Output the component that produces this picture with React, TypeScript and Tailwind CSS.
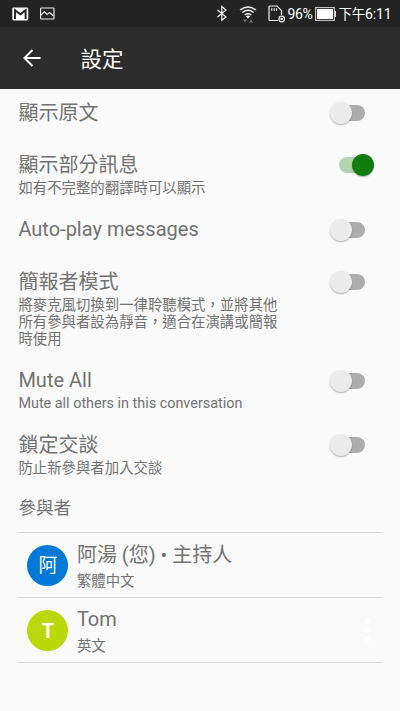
import React from 'react';

function Toggle({ on = false }: { on?: boolean }) {
  return (
    <span className={`relative block h-4 w-[30px] shrink-0 rounded-full ${on ? 'mr-[31px] bg-[#b2d4b3]' : 'mr-[35px] bg-[#adadad]'}`}>
      <span
        className={`absolute -top-[3px] size-[22px] rounded-full shadow-[0_1px_1.5px_rgba(0,0,0,0.3)] ${on ? 'left-[13px] bg-[#117c10]' : '-left-[5px] bg-[#ececec]'}`}
      />
    </span>
  );
}

type RowProps = { title: string; lines?: string[]; on?: boolean; height: string; latin?: boolean };

function SettingRow({ title, lines = [], on, height, latin }: RowProps) {
  return (
    <div className={`flex items-start justify-between ${height}`}>
      <div>
        <div className={`whitespace-nowrap text-[20px] leading-6 ${latin ? '' : 'pt-px'}`}>{title}</div>
        <div className="pt-[3px]">
          {lines.map((line) => (
            <div key={line} className="whitespace-nowrap text-[14.4px] leading-[17px]">{line}</div>
          ))}
        </div>
      </div>
      <div className="pt-[5px]">
        <Toggle on={on} />
      </div>
    </div>
  );
}

type PersonProps = { initial: string; name: string; language: string; color: string; latin?: boolean; menu?: boolean };

function Person({ initial, name, language, color, latin, menu }: PersonProps) {
  return (
    <div className="mr-[18px] flex h-[65px] items-center border-b border-[#d9d9d9] pl-[9px]">
      <div className={`flex size-[41px] items-center justify-center rounded-full pt-[2px] text-white ${color} ${latin ? 'text-[20px] font-bold' : 'text-[19px]'}`}>
        {initial}
      </div>
      <div className="ml-[8.5px] flex-1">
        <div className={`whitespace-nowrap text-[20px] leading-6 ${latin ? 'pt-[2px]' : 'pt-[3px]'}`}>{name}</div>
        <div className={`text-[14.4px] leading-[17px] ${latin ? 'mt-[7px]' : 'mt-[6px]'}`}>{language}</div>
      </div>
      {menu && (
        <div className="mr-3 flex flex-col gap-[3px]">
          <span className="size-[6px] rounded-full bg-white" />
          <span className="size-[6px] rounded-full bg-white" />
          <span className="size-[6px] rounded-full bg-white" />
        </div>
      )}
    </div>
  );
}

function StatusBar() {
  return (
    <div className="flex h-[27px] items-center bg-[#232323] pl-3 text-white">
      <svg width="17" height="14" viewBox="0 0 17 14">
        <rect x="0.3" y="0.5" width="16" height="13" rx="1.4" fill="#fff" />
        <path d="M3 12V3.2L8.3 7.2L13.6 3.2V12" fill="none" stroke="#232323" strokeWidth="1.9" />
      </svg>
      <svg className="ml-[11px]" width="15" height="13" viewBox="0 0 15 13" fill="none" stroke="#f0f0f0" strokeWidth="1.15">
        <rect x="0.6" y="1" width="13.4" height="11" rx="0.8" />
        <path d="M1 8L4.5 4.5L7 7.5L9.5 5.5L13.5 9" />
      </svg>
      <svg className="ml-auto" width="12" height="17" viewBox="0 0 12 17" fill="none" stroke="#f4f4f4" strokeWidth="1.2">
        <path d="M1.5 5L10 12L5.8 15.3V1.5L10 5L1.5 12" />
      </svg>
      <svg className="ml-[11.5px]" width="18" height="18" viewBox="0 0 18 18" fill="none" stroke="#f2f2f2" strokeWidth="1.4">
        <path d="M1 5Q9 -1 17 5M3.3 7.5Q9 3 14.7 7.5M5.6 10Q9 7.4 12.4 10" />
        <path d="M6.8 11.2Q9 9.7 11.2 11.2L9 13.4Z" fill="#fff" stroke="none" />
        <path d="M4 14.5H8L6 17.5ZM10 17.5H14L12 14.5Z" fill="#777" stroke="none" />
      </svg>
      <svg className="ml-[10.5px]" width="18" height="18" viewBox="0 0 18 18" fill="none" stroke="#eee" strokeWidth="1.2">
        <path d="M10 15.5H2Q1 15.5 1 14.5V2Q1 1 2 1H9L13.5 5.5V10" />
        <path d="M3.8 3V6M6.2 3V6M8.6 3V6" strokeWidth="1" />
        <circle cx="13.7" cy="14" r="2.8" />
        <circle cx="13.7" cy="14" r="0.7" fill="#eee" />
      </svg>
      <span className="ml-[2px] w-[25px] whitespace-nowrap pt-[2px] text-[14px] tracking-[-0.4px]">96%</span>
      <svg className="ml-[2px]" width="22" height="14" viewBox="0 0 22 14">
        <rect x="0.6" y="0.6" width="18.8" height="12.8" fill="none" stroke="#ccc" strokeWidth="1.1" />
        <rect x="2" y="2" width="16" height="10" fill="#fff" />
        <rect x="19.5" y="4" width="1.5" height="6" fill="#ddd" />
      </svg>
      <span className="ml-[2px] mr-[10.5px] w-[51px] whitespace-nowrap pt-[2px] text-[14px] tracking-[-0.2px]">
        <span className="text-[13.5px]">下午</span>6:11
      </span>
    </div>
  );
}

export default function App() {
  return (
    <main className="h-[711px] w-[400px] overflow-hidden bg-[#fafafa] font-[Roboto,'Noto_Sans_CJK_TC',sans-serif] text-[#727272]">
      <StatusBar />
      <header className="flex h-[62px] items-center bg-[#2c2c2c] pl-[22.5px] text-white">
        <svg width="18" height="18" viewBox="0 0 18 18" fill="none" stroke="#fff" strokeWidth="2">
          <path d="M17.5 9H1.5M9.5 1L1.5 9L9.5 17" />
        </svg>
        <h1 className="ml-10 pt-[3px] text-[21.5px] leading-8">設定</h1>
      </header>
      <section className="pl-[18.4px] pt-[11px]">
        <SettingRow title="顯示原文" height="h-[52px]" />
        <SettingRow title="顯示部分訊息" lines={['如有不完整的翻譯時可以顯示']} on height="h-[65px]" />
        <SettingRow title="Auto-play messages" latin height="h-[52px]" />
        <SettingRow
          title="簡報者模式"
          lines={['將麥克風切換到一律聆聽模式，並將其他', '所有參與者設為靜音，適合在演講或簡報', '時使用']}
          height="h-[99px]"
        />
        <SettingRow title="Mute All" lines={['Mute all others in this conversation']} latin height="h-[64px]" />
        <SettingRow title="鎖定交談" lines={['防止新參與者加入交談']} height="h-[63px]" />
        <h2 className="mr-[18px] h-[38px] border-b border-[#d9d9d9] text-[17.6px] leading-[26px]">參與者</h2>
        <Person initial="阿" name="阿湯 (您) • 主持人" language="繁體中文" color="bg-[#0078d7]" />
        <Person initial="T" name="Tom" language="英文" color="bg-[#bad80a]" latin menu />
      </section>
    </main>
  );
}
